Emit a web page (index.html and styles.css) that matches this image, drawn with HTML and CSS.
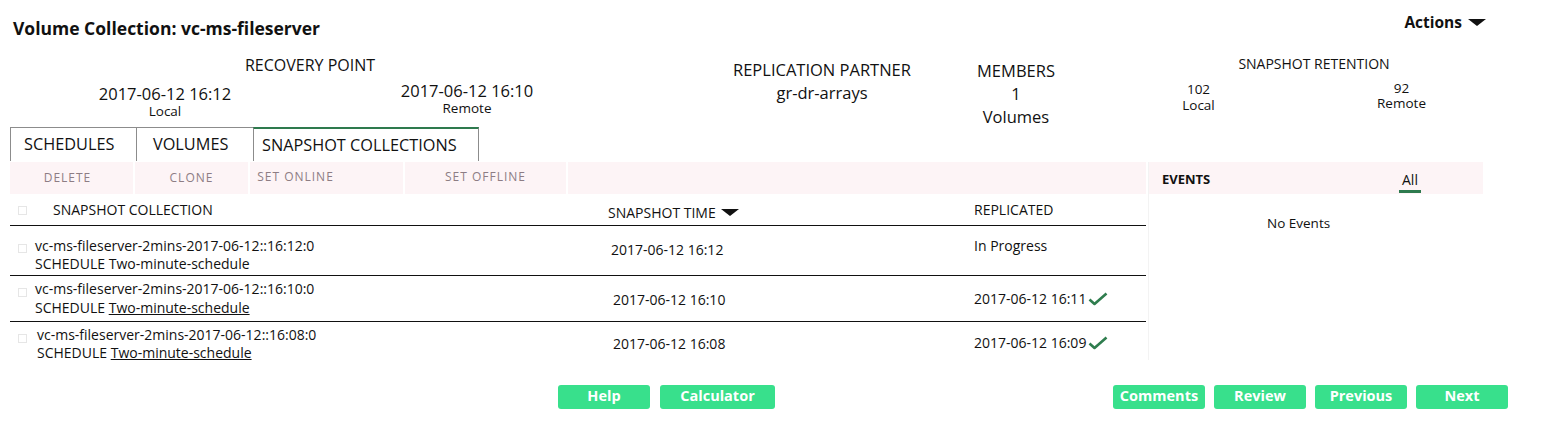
FILE: index.html
```html
<!DOCTYPE html>
<html>
<head>
    <title>Volume Collection: vc-ms-fileserver</title>
    <link rel="stylesheet" href="styles.css">
</head>
<body>
    <div class="top">
        <h1 class="title">Volume Collection: vc-ms-fileserver</h1>
        <div class="actions">Actions <span class="caret"></span></div>
    </div>

    <div class="summary">
        <div class="stat recovery">
            <div class="label">RECOVERY POINT</div>
            <div class="pair">
                <div class="sub"><div class="val">2017-06-12 16:12</div><div class="cap">Local</div></div>
                <div class="sub remote"><div class="val">2017-06-12 16:10</div><div class="cap">Remote</div></div>
            </div>
        </div>
        <div class="stat partner">
            <div class="label">REPLICATION PARTNER</div>
            <div class="val">gr-dr-arrays</div>
        </div>
        <div class="stat members">
            <div>MEMBERS</div>
            <div>1</div>
            <div>Volumes</div>
        </div>
        <div class="stat retention">
            <div class="label">SNAPSHOT RETENTION</div>
            <div class="pair">
                <div class="sub"><div>102</div><div>Local</div></div>
                <div class="sub remote"><div>92</div><div>Remote</div></div>
            </div>
        </div>
    </div>

    <div class="tabs">
        <div class="tab t-sched">SCHEDULES</div>
        <div class="tab t-vol">VOLUMES</div>
        <div class="tab t-snap active">SNAPSHOT COLLECTIONS</div>
    </div>

    <div class="main">
        <div class="left">
            <div class="toolbar">
                <div class="tool b-del">DELETE</div>
                <div class="tool b-clone">CLONE</div>
                <div class="tool b-on">SET ONLINE</div>
                <div class="tool b-off">SET OFFLINE</div>
            </div>

            <div class="grid head">
                <div class="chk"><span class="box"></span></div>
                <div class="h-name">SNAPSHOT COLLECTION</div>
                <div class="h-time">SNAPSHOT TIME <span class="sort"></span></div>
                <div class="h-rep">REPLICATED</div>
            </div>

            <div class="grid row r1">
                <div class="chk"><span class="box"></span></div>
                <div class="name">
                    <div>vc-ms-fileserver-2mins-2017-06-12::16:12:0</div>
                    <div>SCHEDULE Two-minute-schedule</div>
                </div>
                <div class="time">2017-06-12 16:12</div>
                <div class="rep">In Progress</div>
            </div>
            <div class="grid row r2">
                <div class="chk"><span class="box"></span></div>
                <div class="name">
                    <div>vc-ms-fileserver-2mins-2017-06-12::16:10:0</div>
                    <div>SCHEDULE <a class="link">Two-minute-schedule</a></div>
                </div>
                <div class="time">2017-06-12 16:10</div>
                <div class="rep">2017-06-12 16:11<svg class="check" width="20" height="14" viewBox="0 0 20 14"><path d="M1.5 7.5 L6.5 12 L18.5 1.5" fill="none" stroke="#2f7d4e" stroke-width="2.6" stroke-linejoin="round"/></svg></div>
            </div>
            <div class="grid row r3">
                <div class="chk"><span class="box"></span></div>
                <div class="name">
                    <div>vc-ms-fileserver-2mins-2017-06-12::16:08:0</div>
                    <div>SCHEDULE <a class="link">Two-minute-schedule</a></div>
                </div>
                <div class="time">2017-06-12 16:08</div>
                <div class="rep">2017-06-12 16:09<svg class="check" width="20" height="14" viewBox="0 0 20 14"><path d="M1.5 7.5 L6.5 12 L18.5 1.5" fill="none" stroke="#2f7d4e" stroke-width="2.6" stroke-linejoin="round"/></svg></div>
            </div>
        </div>

        <div class="events">
            <div class="events-head">
                <span class="ev-title">EVENTS</span>
                <span class="ev-all">All</span>
            </div>
            <div class="ev-body">No Events</div>
        </div>
    </div>

    <div class="footer">
        <div class="btn-group left-btns">
            <button class="btn w-help">Help</button>
            <button class="btn w-calc">Calculator</button>
        </div>
        <div class="btn-group right-btns">
            <button class="btn w-com">Comments</button>
            <button class="btn w-rev">Review</button>
            <button class="btn w-prev">Previous</button>
            <button class="btn w-next">Next</button>
        </div>
    </div>
</body>
</html>
```

FILE: styles.css
```css
body {
    margin: 0;
    width: 1550px;
    height: 434px;
    overflow: hidden;
    font-family: "Open Sans", "Liberation Sans", sans-serif;
    color: #111;
    background: #fff;
}

/* header */
.top {
    display: flex;
    justify-content: space-between;
    align-items: flex-start;
    padding: 0 64px 0 13px;
    height: 50px;
}

.title {
    margin: 17px 0 0;
    font-size: 17.5px;
    line-height: 22px;
    font-weight: 700;
}

.actions {
    margin-top: 11px;
    font-size: 15.5px;
    line-height: 22px;
    font-weight: 700;
    display: flex;
    align-items: center;
}

.caret {
    display: inline-block;
    margin-left: 6px;
    border-left: 9px solid transparent;
    border-right: 9px solid transparent;
    border-top: 7px solid #111;
}

/* summary figures */
.summary {
    display: flex;
    height: 77px;
    text-align: center;
}

.stat .label {
    font-size: 16px;
    line-height: 20px;
}

.recovery {
    margin-left: 10px;
    width: 600px;
    padding-top: 5px;
}

.recovery .pair {
    display: flex;
    padding-left: 75px;
    gap: 142px;
    margin-top: 9px;
}

.recovery .sub {
    width: 160px;
}

.recovery .val {
    font-size: 16.5px;
    line-height: 20px;
}

.recovery .cap {
    font-size: 13.5px;
    line-height: 14px;
}

.recovery .remote {
    margin-top: -3px;
}

.partner {
    margin-left: 112px;
    width: 200px;
    padding-top: 10px;
}

.partner .label {
    font-size: 16.5px;
}

.partner .val {
    margin-top: 3px;
    font-size: 16.5px;
    line-height: 20px;
}

.members {
    margin-left: 44px;
    width: 100px;
    padding-top: 9px;
    font-size: 16.5px;
    line-height: 23px;
}

.retention {
    margin-left: 31px;
    width: 406px;
    padding-top: 5px;
    font-size: 13.5px;
    line-height: 16px;
}

.retention .label {
    font-size: 14px;
    line-height: 18px;
    padding-left: 28px;
}

.retention .pair {
    display: flex;
    margin-top: 8px;
}

.retention .sub {
    width: 204px;
}

.retention .remote {
    line-height: 15px;
}

/* tabs */
.tabs {
    display: flex;
    margin-left: 10px;
    height: 34px;
}

.tab {
    box-sizing: border-box;
    border: 1px solid #8c8c8c;
    border-bottom: none;
    border-right: none;
    font-size: 16.3px;
    line-height: 33px;
}

.t-sched { width: 126px; padding-left: 13px; }
.t-vol { width: 117px; padding-left: 16px; }
.t-snap { width: 226px; padding-left: 8px; border-right: 1px solid #8c8c8c; }

.tab.active {
    border-top: 2px solid #2e7a4e;
    line-height: 32px;
}

/* main area */
.main {
    display: flex;
    margin-top: 1px;
    margin-left: 10px;
}

.left {
    width: 1136px;
}

.toolbar {
    display: flex;
    height: 32px;
    background: #fdf4f6;
}

.tool {
    box-sizing: border-box;
    border-right: 2px solid #fff;
    font-size: 12px;
    letter-spacing: 1px;
    color: #8d7d84;
    text-align: center;
    line-height: 32px;
}

.b-del { width: 125px; padding-right: 8px; }
.b-clone { width: 115px; }
.b-on { width: 155px; padding-right: 62px; line-height: 29px; }
.b-off { width: 163px; line-height: 29px; }

.grid {
    display: grid;
    grid-template-columns: 25px 573px 366px 1fr;
    border-bottom: 1px solid #111;
}

.chk {
    padding-left: 8px;
}

.box {
    display: inline-block;
    width: 7px;
    height: 7px;
    border: 1px solid #e6e6e6;
}

.head {
    height: 31px;
    align-items: center;
    font-size: 14px;
}

.head .h-name { padding-left: 18px; }
.head .h-time { display: flex; align-items: center; padding-top: 5px; }
.head .h-rep { padding-bottom: 1px; }

.sort {
    display: inline-block;
    margin-left: 5px;
    border-left: 9px solid transparent;
    border-right: 9px solid transparent;
    border-top: 7px solid #111;
}

.row {
    box-sizing: border-box;
    font-size: 14px;
    line-height: 18px;
}

.row .chk {
    align-self: start;
}

.row .time,
.row .rep {
    align-self: center;
    display: flex;
    align-items: center;
}

.row .time { padding-left: 5px; }

.r1 { height: 50px; padding-top: 11px; }
.r1 .chk { padding-top: 2px; }
.r1 .time { margin-top: -12px; padding-left: 3px; }
.r1 .rep { margin-top: -20px; }

.r2 { height: 46px; padding-top: 4px; }
.r2 .chk { padding-top: 3px; }
.r2 .name div + div { margin-top: 1px; }
.r2 .time { margin-top: -2px; }
.r2 .rep { margin-top: -4px; }

.r3 { height: 40px; padding-top: 4px; border-bottom: none; }
.r3 .chk { padding-top: 3px; }
.r3 .name { padding-left: 2px; }
.r3 .rep { margin-top: -2px; }

.link {
    text-decoration: underline;
}

.check {
    margin-left: 2px;
}

/* events */
.events {
    width: 334px;
    margin-left: 2px;
    border-left: 1px solid #f3f3f3;
    height: 198px;
}

.events-head {
    position: relative;
    height: 32px;
    background: #fdf4f6;
    font-size: 13px;
}

.ev-title {
    position: absolute;
    left: 13px;
    top: 8px;
    font-weight: 700;
}

.ev-all {
    position: absolute;
    left: 250px;
    top: 8px;
    font-size: 14px;
    line-height: 20px;
    padding: 0 3px;
    border-bottom: 3px solid #2e7a4e;
}

.ev-body {
    padding: 20px 0 0 118px;
    font-size: 13.5px;
}

/* footer buttons */
.footer {
    display: flex;
    margin-top: 23px;
}

.btn-group {
    display: flex;
    gap: 10px;
}

.left-btns {
    margin-left: 558px;
}

.right-btns {
    margin-left: auto;
    margin-right: 42px;
    gap: 9px;
}

.btn {
    height: 24px;
    border: none;
    border-radius: 3px;
    background: #38e08c;
    color: #fff;
    font-family: "Open Sans", "Liberation Sans", sans-serif;
    font-weight: 700;
    font-size: 14.5px;
    line-height: 22px;
    padding: 0 0 2px;
}

.w-help { width: 92px; }
.w-calc { width: 115px; }
.w-com { width: 92px; }
.w-rev { width: 92px; }
.w-prev { width: 92px; }
.w-next { width: 92px; }
```
